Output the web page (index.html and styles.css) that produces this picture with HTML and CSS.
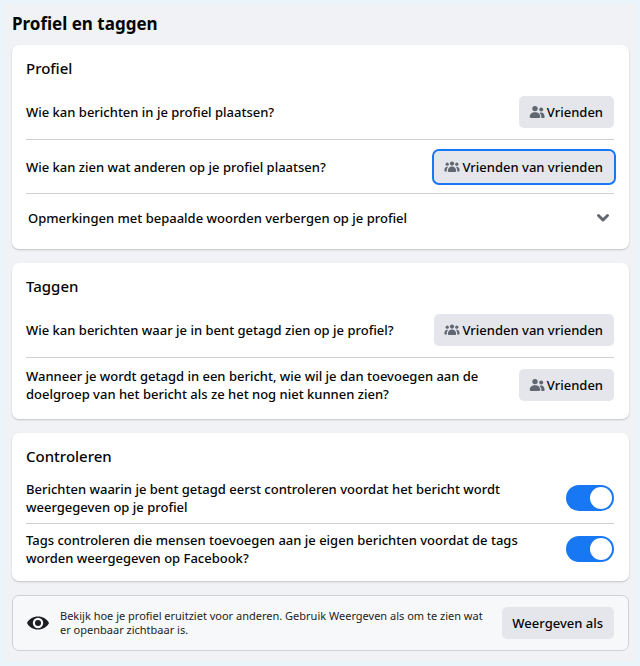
FILE: index.html
```html
<!DOCTYPE html>
<html lang="nl">
<head>
  <meta charset="UTF-8" />
  <meta name="viewport" content="width=device-width, initial-scale=1.0"/>
  <title>Profiel en taggen</title>
  <link rel="stylesheet" href="styles.css">
</head>
<body>
  <svg class="sprite" aria-hidden="true">
    <symbol id="icon-friends" viewBox="0 0 16 16">
      <circle cx="6" cy="4.600" r="2.700"/>
      <path d="M6 8.200c-3.100 0-5.300 1.900-5.300 4.400 0 .9.500 1.400 1.200 1.400h8.200c.7 0 1.200-.5 1.200-1.400 0-2.500-2.200-4.400-5.300-4.400z"/>
      <circle cx="12.200" cy="5.600" r="2"/>
      <path d="M12.200 8.600c-.7 0-1.300.1-1.800.4 1.300.9 2 2.300 2 3.900 0 .4 0 .7-.1 1.100h2.200c.7 0 1.100-.4 1.100-1.100 0-2.500-1.300-4.300-3.400-4.300z"/>
    </symbol>
    <symbol id="icon-group" viewBox="0 0 16 16">
      <circle cx="8" cy="4.600" r="2.100"/>
      <circle cx="3.200" cy="5.200" r="1.600"/>
      <circle cx="12.800" cy="5.200" r="1.600"/>
      <path d="M8 7.500c-2.500 0-4.100 1.700-4.100 4 0 1 .4 1.500 1.100 1.500h6c.7 0 1.100-.5 1.100-1.500 0-2.300-1.600-4-4.100-4z"/>
      <path d="M4.100 7.800C1.900 7.300.4 8.900.4 11.200c0 .8.300 1.300 1 1.300h1.400c-.2-1.900.2-3.400 1.300-4.700z"/>
      <path d="M11.900 7.800c2.200-.5 3.700 1.100 3.700 3.400 0 .8-.3 1.300-1 1.300h-1.400c.2-1.900-.2-3.400-1.300-4.700z"/>
    </symbol>
  </svg>

  <main class="page">
    <h1>Profiel en taggen</h1>

    <section class="card">
      <h2>Profiel</h2>
      <div class="row">
        <p>Wie kan berichten in je profiel plaatsen?</p>
        <button type="button" class="btn"><svg class="icon"><use href="#icon-friends"/></svg>Vrienden</button>
      </div>
      <div class="row">
        <p>Wie kan zien wat anderen op je profiel plaatsen?</p>
        <button type="button" class="btn selected"><svg class="icon"><use href="#icon-group"/></svg>Vrienden van vrienden</button>
      </div>
      <button type="button" class="row expand" aria-expanded="false">
        Opmerkingen met bepaalde woorden verbergen op je profiel
        <svg class="chevron" viewBox="0 0 14 14"><path d="M2.500 4.500 7 9l4.500-4.500"/></svg>
      </button>
    </section>

    <section class="card">
      <h2>Taggen</h2>
      <div class="row">
        <p>Wie kan berichten waar je in bent getagd zien op je profiel?</p>
        <button type="button" class="btn"><svg class="icon"><use href="#icon-group"/></svg>Vrienden van vrienden</button>
      </div>
      <div class="row">
        <p>Wanneer je wordt getagd in een bericht, wie wil je dan toevoegen aan de doelgroep van het bericht als ze het nog niet kunnen zien?</p>
        <button type="button" class="btn"><svg class="icon"><use href="#icon-friends"/></svg>Vrienden</button>
      </div>
    </section>

    <section class="card">
      <h2>Controleren</h2>
      <div class="row compact">
        <label for="reviewPosts">Berichten waarin je bent getagd eerst controleren voordat het bericht wordt weergegeven op je profiel</label>
        <input type="checkbox" id="reviewPosts" class="switch" checked />
      </div>
      <div class="row compact">
        <label for="reviewTags">Tags controleren die mensen toevoegen aan je eigen berichten voordat de tags worden weergegeven op Facebook?</label>
        <input type="checkbox" id="reviewTags" class="switch" checked />
      </div>
    </section>

    <section class="view-as">
      <svg class="eye" viewBox="0 0 24 24">
        <path fill-rule="evenodd" d="M12 5.500C7 5.500 3 8 1 12c2 4 6 6.500 11 6.500s9-2.500 11-6.500c-2-4-6-6.500-11-6.500zm0 1.300a5.200 5.200 0 1 1 0 10.400 5.200 5.200 0 0 1 0-10.400z"/>
        <circle cx="12" cy="12" r="3"/>
      </svg>
      <p>Bekijk hoe je profiel eruitziet voor anderen. Gebruik Weergeven als om te zien wat er openbaar zichtbaar is.</p>
      <button type="button" class="btn">Weergeven als</button>
    </section>
  </main>
</body>
</html>
```
FILE: styles.css
```css
* {
  box-sizing: border-box;
}

body {
  margin: 0;
  padding: 4px;
  background: #eaf4fb;
  color: #050505;
  font-family: 'Segoe UI', 'Noto Sans', sans-serif;
  font-size: 13px;
  font-weight: 500;
  line-height: 18px;
}

h1, h2, p {
  margin: 0;
}

h1 {
  font-size: 17px;
  font-weight: 700;
  line-height: 24px;
  margin-bottom: 9px;
}

h2 {
  font-size: 15px;
  font-weight: 500;
  line-height: 20px;
  margin-bottom: 7px;
}

.sprite {
  display: none;
}

.page {
  background: #f0f2f5;
  padding: 8px 7px 11px 8px;
}

.card {
  background: #fff;
  border-radius: 7px;
  box-shadow: 0 1px 2px rgba(0,0,0,0.2);
  padding: 13px 15px 8px 14px;
  margin-bottom: 14px;
}

.row {
  display: flex;
  align-items: center;
  justify-content: space-between;
  gap: 32px;
  min-height: 54px;
}

.row + .row {
  border-top: 1px solid #ced0d4;
}

.row.compact {
  min-height: 50px;
  gap: 40px;
}

.row + .row.expand {
  width: 100%;
  min-height: 48px;
  padding: 0 4px 0 2px;
  border-width: 1px 0 0;
  background: none;
  color: inherit;
  font: inherit;
  text-align: left;
  cursor: pointer;
}

.btn {
  display: flex;
  align-items: center;
  flex-shrink: 0;
  gap: 2px;
  height: 32px;
  padding: 0 11px 0 10px;
  border: none;
  border-radius: 5px;
  background: #e4e6eb;
  color: #050505;
  font: inherit;
  cursor: pointer;
}

.btn.selected {
  outline: 2px solid #1877f2;
}

.icon {
  width: 16px;
  height: 16px;
  fill: #606770;
}

.chevron {
  width: 14px;
  height: 14px;
  fill: none;
  stroke: #606770;
  stroke-width: 3;
  stroke-linecap: round;
  stroke-linejoin: round;
}

.switch {
  appearance: none;
  flex-shrink: 0;
  width: 48px;
  height: 26px;
  margin: 0;
  padding: 2px;
  border-radius: 13px;
  background: #ccd0d5;
  cursor: pointer;
}

.switch::before {
  content: "";
  display: block;
  width: 22px;
  height: 22px;
  border-radius: 50%;
  background: #fff;
}

.switch:checked {
  background: #1877f2;
}

.switch:checked::before {
  margin-left: auto;
}

.view-as {
  display: flex;
  align-items: center;
  background: #f7f8fa;
  border: 1px solid #ced0d4;
  border-radius: 7px;
  padding: 11px 14px 11px 13px;
}

.view-as p {
  flex: 1;
  color: #1c1e21;
  font-size: 11px;
  font-weight: 400;
  line-height: 14px;
}

.view-as .btn {
  margin-left: 12px;
}

.eye {
  flex-shrink: 0;
  width: 24px;
  height: 24px;
  margin-right: 10px;
  fill: #1c1e21;
}
```
